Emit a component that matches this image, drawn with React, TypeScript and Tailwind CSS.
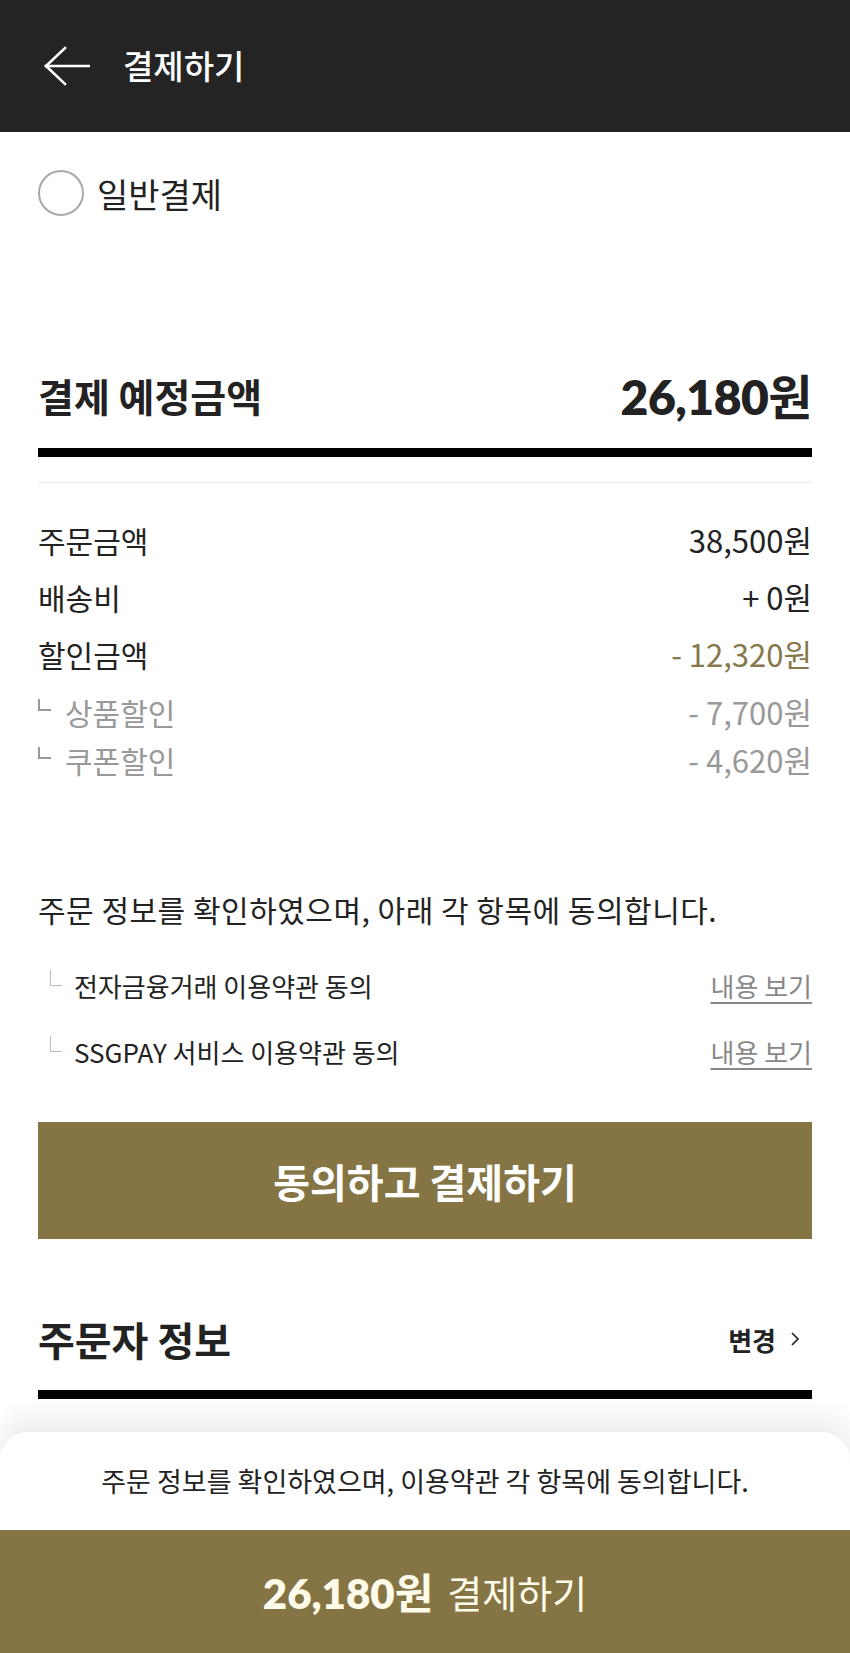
import React from 'react';

const KR = { fontFamily: '"Noto Sans CJK KR", "Noto Sans", sans-serif' };
const NUM = { fontFamily: 'Lato, "Noto Sans CJK KR", sans-serif' };

const Row = ({ label, value, valueClass = 'text-[#222]' }: { label: string; value: string; valueClass?: string }) => (
    <div className="flex h-[57px] items-center justify-between text-[30px] text-[#222]">
        <span>{label}</span>
        <span className={`text-[31px] ${valueClass}`}>{value}</span>
    </div>
);

const SubRow = ({ label, value }: { label: string; value: string }) => (
    <div className="flex h-[48px] items-center justify-between text-[30px] text-[#999]">
        <div className="flex items-center">
            <span className="mb-[14px] mr-[14px] h-[12px] w-[13px] border-b-2 border-l-2 border-[#999]" />
            <span>{label}</span>
        </div>
        <span className="text-[31px]">{value}</span>
    </div>
);

const Term = ({ label, className }: { label: string; className: string }) => (
    <div className={`flex h-[40px] items-center justify-between ${className}`}>
        <div className="flex items-center pl-[12px]">
            <span className="mb-[14px] mr-[12px] h-[16px] w-[12px] border-b-[1.5px] border-l-[1.5px] border-[#bbb]" />
            <span className="text-[26px] text-[#222]">{label}</span>
        </div>
        <span className="text-[26px] text-[#888] underline underline-offset-[5px] decoration-[1.5px]">내용 보기</span>
    </div>
);

export default function App() {
    return (
        <div className="relative h-[1653px] w-[850px] overflow-hidden bg-white" style={KR}>
            <header className="flex h-[132px] items-center bg-[#242424] px-[44px]">
                <svg width="46" height="40" viewBox="0 0 46 40" fill="none" stroke="white" strokeWidth="2.6" strokeLinecap="square">
                    <path d="M2 20 H45" />
                    <path d="M21 2 L2 20 L21 38" />
                </svg>
                <h1 className="ml-[33px] text-[33px] font-medium text-white">결제하기</h1>
            </header>

            <div className="px-[38px]">
                <div className="mt-[38px] flex h-[46px] items-center">
                    <span className="h-[46px] w-[46px] rounded-full border-2 border-[#a8a8a8]" />
                    <span className="ml-[13px] text-[34px] text-[#222]">일반결제</span>
                </div>

                <div className="mt-[149px] flex h-[60px] items-center justify-between">
                    <h2 className="text-[39px] font-bold text-[#222]">결제 예정금액</h2>
                    <span className="text-[48px] font-extrabold tracking-[-0.5px] text-[#222]" style={NUM}>
                        26,180<span style={KR} className="font-bold">원</span>
                    </span>
                </div>
                <div className="mt-[23px] h-[9px] bg-black" />
                <div className="mt-[25px] h-px bg-[#eee]" />

                <div className="mt-[29px]">
                    <Row label="주문금액" value="38,500원" />
                    <Row label="배송비" value="+ 0원" />
                    <Row label="할인금액" value="- 12,320원" valueClass="text-[#86784a]" />
                    <div className="mt-[5px]">
                        <SubRow label="상품할인" value="- 7,700원" />
                        <SubRow label="쿠폰할인" value="- 4,620원" />
                    </div>
                </div>

                <p className="mt-[105px] flex h-[40px] items-center text-[30px] tracking-[0.5px] text-[#222]">
                    주문 정보를 확인하였으며, 아래 각 항목에 동의합니다.
                </p>
                <Term label="전자금융거래 이용약관 동의" className="mt-[36px]" />
                <Term label="SSGPAY 서비스 이용약관 동의" className="mt-[26px]" />

                <button className="mt-[51px] flex h-[117px] w-full items-center justify-center bg-[#857544] text-[40px] font-bold text-white">
                    동의하고 결제하기
                </button>

                <div className="mt-[70px] flex h-[60px] items-center justify-between">
                    <h2 className="text-[40px] font-bold text-[#222]">주문자 정보</h2>
                    <span className="mr-[12px] flex items-center text-[26px] font-bold text-[#222]">
                        변경
                        <svg className="ml-[14px]" width="10" height="18" viewBox="0 0 10 18" fill="none" stroke="#222" strokeWidth="1.7">
                            <path d="M2 3 L8 9 L2 15" />
                        </svg>
                    </span>
                </div>
                <div className="mt-[21px] h-[9px] bg-black" />
            </div>

            <div className="absolute bottom-0 left-0 right-0 h-[221px] overflow-hidden rounded-t-[28px] bg-white shadow-[0_-12px_30px_rgba(0,0,0,0.09)]">
                <div className="flex h-[98px] items-center justify-center text-[27px] text-[#222]">
                    주문 정보를 확인하였으며, 이용약관 각 항목에 동의합니다.
                </div>
                <button className="flex h-[123px] w-full items-center justify-center bg-[#857544] text-[#fffbea]">
                    <span className="text-[42px] font-extrabold" style={NUM}>
                        26,180<span style={KR} className="font-bold">원</span>
                    </span>
                    <span className="ml-[14px] text-[38px]">결제하기</span>
                </button>
            </div>
        </div>
    );
}
